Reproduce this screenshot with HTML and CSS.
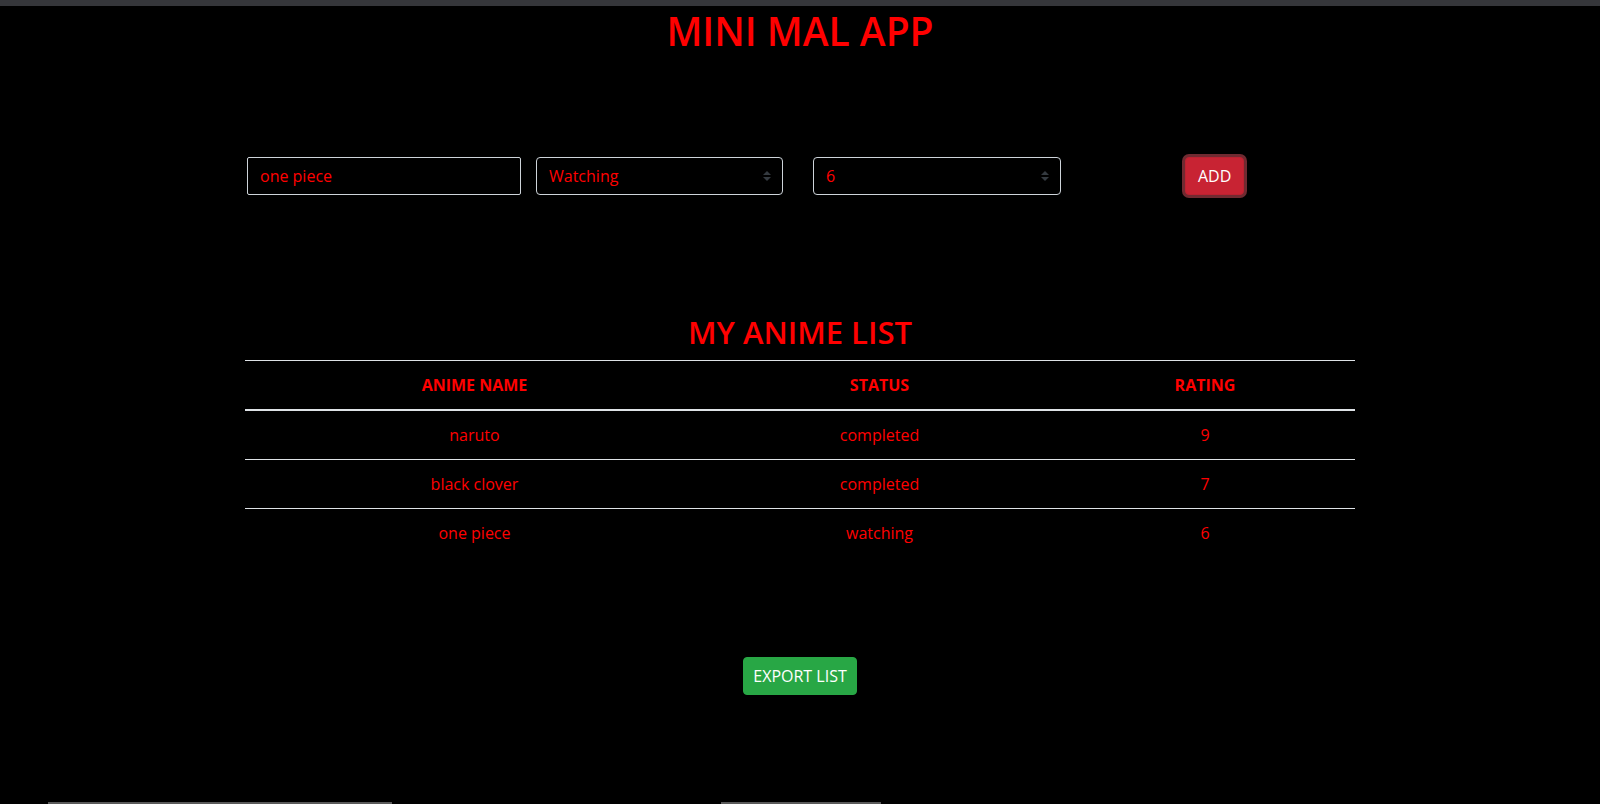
FILE: index.html
```html
<!DOCTYPE html>
<html lang="en">
<head>
<meta charset="utf-8">
<title>Mini MAL App</title>
<link rel="stylesheet" href="styles.css">
</head>
<body>
<div class="topbar"></div>
<h1 class="title">MINI MAL APP</h1>

<form class="add-form">
  <input class="field name-input" type="text" value="one piece">
  <div class="select-wrap status-wrap">
    <select class="field select">
      <option selected>Watching</option>
      <option>Completed</option>
      <option>Plan to watch</option>
    </select>
    <svg class="select-arrow" viewBox="0 0 4 5" width="8" height="10"><path d="M2 0L0 2h4zm0 5L0 3h4z" fill="#343a40"/></svg>
  </div>
  <div class="select-wrap rating-wrap">
    <select class="field select">
      <option selected>6</option>
      <option>7</option>
      <option>8</option>
    </select>
    <svg class="select-arrow" viewBox="0 0 4 5" width="8" height="10"><path d="M2 0L0 2h4zm0 5L0 3h4z" fill="#343a40"/></svg>
  </div>
  <button type="button" class="btn btn-add">ADD</button>
</form>

<h2 class="list-title">MY ANIME LIST</h2>

<table class="anime-table">
  <colgroup>
    <col class="c1"><col class="c2"><col class="c3">
  </colgroup>
  <thead>
    <tr><th>ANIME NAME</th><th>STATUS</th><th>RATING</th></tr>
  </thead>
  <tbody>
    <tr><td>naruto</td><td>completed</td><td>9</td></tr>
    <tr><td>black clover</td><td>completed</td><td>7</td></tr>
    <tr><td>one piece</td><td>watching</td><td>6</td></tr>
  </tbody>
</table>

<div class="export-row">
  <button type="button" class="btn btn-export">EXPORT LIST</button>
</div>

<div class="bottom-bars">
  <div class="bar bar-left"></div>
  <div class="bar bar-right"></div>
</div>
</body>
</html>
```

FILE: styles.css
```css
* { box-sizing: border-box; }

html, body {
  margin: 0;
  padding: 0;
  background: #000;
  height: 804px;
  overflow: hidden;
}

body {
  font-family: "Open Sans", "Noto Sans", sans-serif;
  font-size: 16px;
  line-height: 1.5;
  color: #ff0000;
}

.topbar {
  height: 6px;
  background: #35363a;
}

.title {
  margin: 2px 0 0;
  font-size: 39px;
  font-weight: 600;
  line-height: 1.2;
  text-align: center;
  color: #ff0000;
}

.add-form {
  display: flex;
  align-items: center;
  width: 1110px;
  margin: 102px auto 0;
}

.field {
  display: block;
  height: 38px;
  padding: 6px 12px;
  font-family: inherit;
  font-size: 16px;
  line-height: 1.5;
  color: #ff0000;
  background: #000;
  border: 1px solid #ced4da;
  border-radius: 4px;
  outline: none;
}

.name-input {
  width: 274px;
  margin-left: 2px;
  border-radius: 2px;
}

.select-wrap {
  position: relative;
}

.status-wrap {
  width: 247px;
  margin-left: 15px;
}

.rating-wrap {
  width: 248px;
  margin-left: 30px;
}

.select {
  width: 100%;
  appearance: none;
  -webkit-appearance: none;
  padding-right: 28px;
}

.select-arrow {
  position: absolute;
  right: 12px;
  top: 14px;
}

.btn {
  font-family: inherit;
  font-size: 16px;
  line-height: 1.5;
  padding: 6px 12px;
  border-radius: 4px;
  color: #fff;
  cursor: pointer;
}

.btn-add {
  margin-left: 124px;
  background: #c82333;
  border: 1px solid #bd2130;
  box-shadow: 0 0 0 3px rgba(225, 83, 97, 0.5);
}

.list-title {
  margin: 118px 0 8px;
  font-size: 31px;
  font-weight: 600;
  line-height: 1.25;
  text-align: center;
  color: #ff0000;
}

.anime-table {
  width: 1110px;
  margin: 0 auto;
  border-collapse: collapse;
  table-layout: fixed;
}

.c1 { width: 459px; }
.c2 { width: 351px; }
.c3 { width: 300px; }

.anime-table th,
.anime-table td {
  padding: 12px;
  text-align: center;
  border-top: 1px solid #dee2e6;
  color: #ff0000;
}

.anime-table th {
  font-weight: 700;
  border-bottom: 2px solid #dee2e6;
}

.export-row {
  display: flex;
  justify-content: center;
  margin-top: 100px;
}

.btn-export {
  padding: 6px 9px;
  background: #28a745;
  border: 1px solid #28a745;
}

.bottom-bars {
  display: flex;
  margin-top: 107px;
  height: 2px;
}

.bar {
  height: 2px;
  background: #5a5a5a;
}

.bar-left {
  width: 344px;
  margin-left: 48px;
}

.bar-right {
  width: 160px;
  margin-left: 329px;
}
```
